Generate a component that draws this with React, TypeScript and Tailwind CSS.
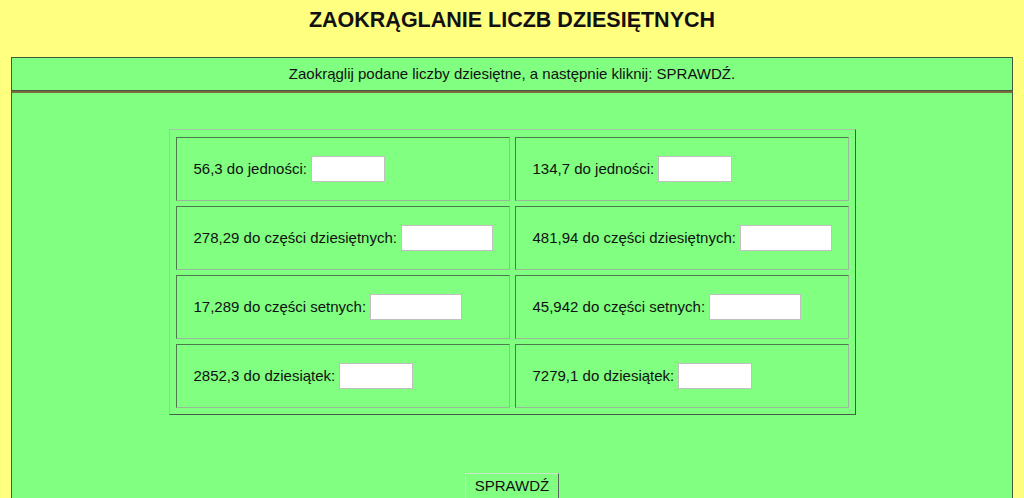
import React from "react";

type Task = { label: string; wide?: boolean };

const rows: Task[][] = [
  [{ label: "56,3 do jedności:" }, { label: "134,7 do jedności:" }],
  [
    { label: "278,29 do części dziesiętnych:", wide: true },
    { label: "481,94 do części dziesiętnych:", wide: true },
  ],
  [
    { label: "17,289 do części setnych:", wide: true },
    { label: "45,942 do części setnych:", wide: true },
  ],
  [{ label: "2852,3 do dziesiątek:" }, { label: "7279,1 do dziesiątek:" }],
];

function Cell({ task }: { task: Task }) {
  return (
    <div className="w-[334px] h-[64px] flex items-center pl-[17px] border border-t-[#4d7a4d] border-l-[#4d7a4d] border-b-[#9ab89a] border-r-[#9ab89a]">
      <span className="text-[15px] text-[#111]">{task.label}</span>
      <input
        type="text"
        className={`ml-[4px] h-[26px] bg-white border border-[#c0c0c0] outline-none ${task.wide ? "w-[92px]" : "w-[74px]"}`}
      />
    </div>
  );
}

export default function App() {
  return (
    <div className="bg-[#ffff80] font-['Liberation_Sans',Arial,sans-serif] text-[#111] overflow-hidden h-[498px]">
      <h1 className="h-[57px] pt-[8px] text-center text-[21.5px] font-bold leading-[24px]">
        ZAOKRĄGLANIE LICZB DZIESIĘTNYCH
      </h1>
      <div className="mx-[11px] bg-[#80ff80] border border-[#3f5a3f] h-[34px] flex items-center justify-center text-[15px]">
        Zaokrąglij podane liczby dziesiętne, a następnie kliknij: SPRAWDŹ.
      </div>
      <div className="mx-[11px] bg-[#80ff80] border-x border-[#3f5a3f] border-t-2 border-t-[#7d6b3c] pt-[36px] h-[420px] flex flex-col items-center">
        <div className="p-[6px] pt-[7px] border border-t-[#a8c4a8] border-l-[#a8c4a8] border-b-[#4a5a4a] border-r-[#4a5a4a] flex flex-col gap-[5px]">
          {rows.map((row, i) => (
            <div key={i} className="flex gap-[5px]">
              {row.map((t) => (
                <Cell key={t.label} task={t} />
              ))}
            </div>
          ))}
        </div>
        <button className="mt-[58px] w-[94px] h-[26px] bg-[#80ff80] text-[15px] border border-t-[#c8e8c8] border-l-[#c8e8c8] border-b-[#5a6a5a] border-r-[#5a6a5a]">
          SPRAWDŹ
        </button>
      </div>
    </div>
  );
}
